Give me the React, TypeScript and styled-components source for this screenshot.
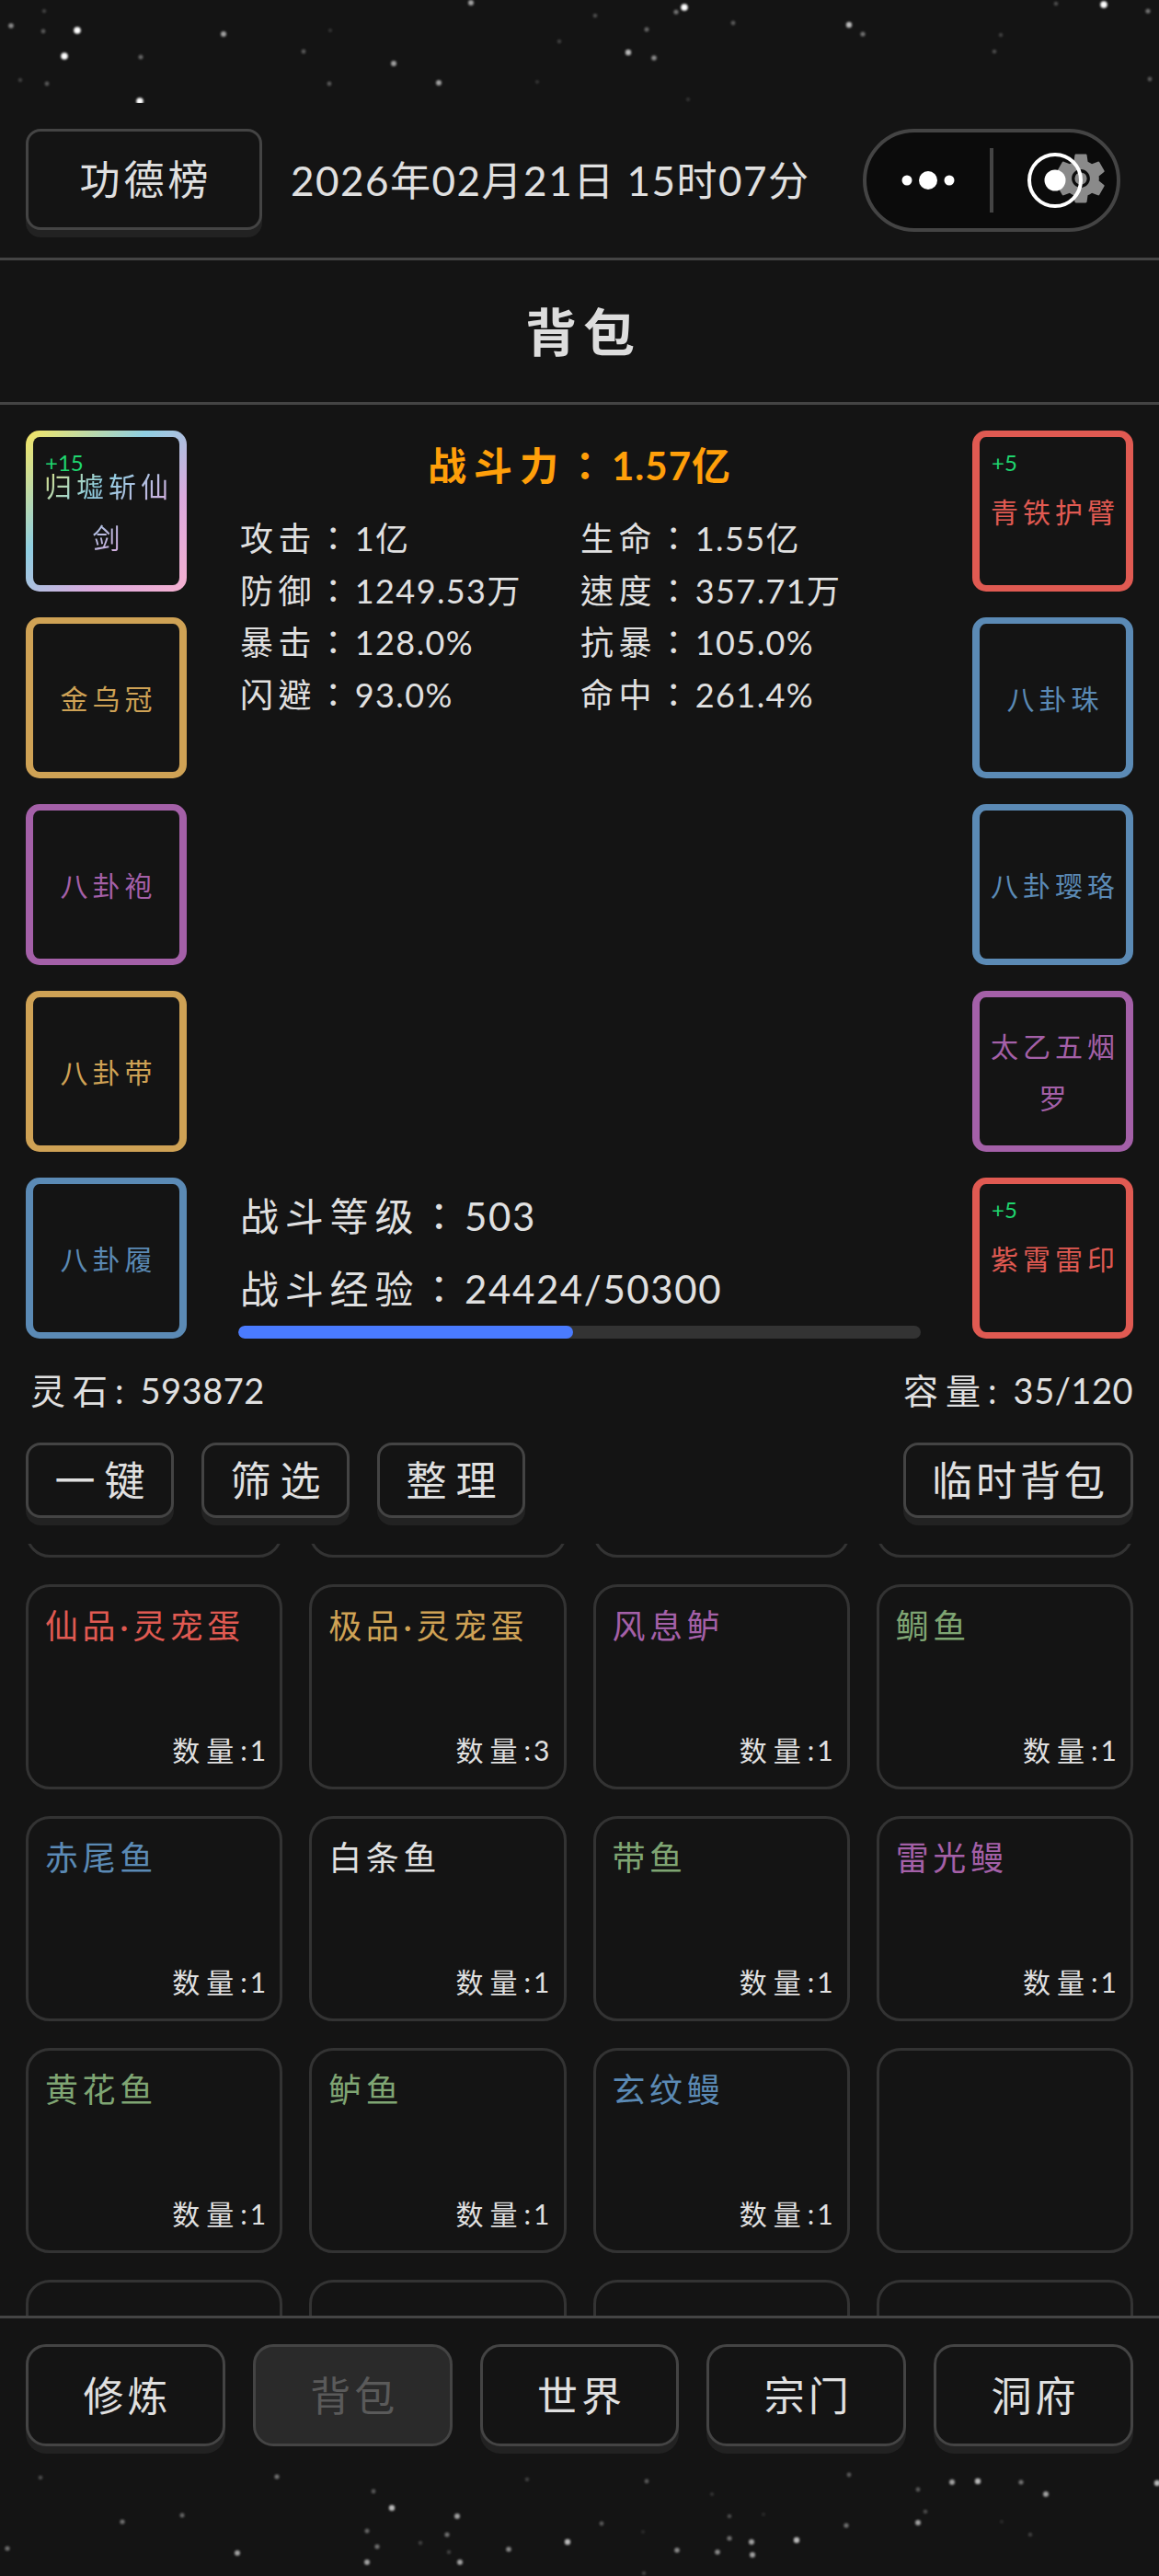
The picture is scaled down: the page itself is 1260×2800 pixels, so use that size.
import React from 'react'
import styled, { createGlobalStyle } from 'styled-components'

const FONT = `Lato, "Noto Sans CJK SC", sans-serif`
// TC keeps the full-width colon centred in its em box, like the reference
const FONT_COLON = `Lato, "Noto Sans CJK TC", sans-serif`

const GlobalStyle = createGlobalStyle`
    html, body {
        margin: 0;
        padding: 0;
        background: #141414;
    }
    * {
        box-sizing: border-box;
    }
`

const Page = styled.div`
    width: 1260px;
    height: 2800px;
    overflow: hidden;
    display: flex;
    flex-direction: column;
    background: #141414;
    color: #e0e0e0;
    font-family: ${FONT};
`

const StarSvg = styled.svg`
    display: block;
    flex: none;
`

const Header = styled.header`
    flex: none;
    height: 171px;
    display: flex;
    align-items: flex-start;
    padding: 28px 42px 0 28px;
    border-bottom: 3px solid #444;
`

const RaisedButton = styled.button<{ $spacing?: number; $width: number; $height: number }>`
    flex: none;
    width: ${({ $width }) => $width}px;
    height: ${({ $height }) => $height}px;
    padding: 0 0 0 ${({ $spacing }) => $spacing ?? 4}px;
    border: 3px solid #444;
    border-radius: 16px;
    background: #141414;
    box-shadow: 0 8px 0 #222;
    color: #e0e0e0;
    font-family: ${FONT};
    font-size: 44px;
    line-height: 1;
    letter-spacing: ${({ $spacing }) => $spacing ?? 4}px;
`

const DateText = styled.div`
    margin-left: 31px;
    height: 112px;
    line-height: 112px;
    font-size: 44px;
    letter-spacing: 1.5px;
    white-space: nowrap;
`

const Capsule = styled.div`
    margin-left: auto;
    width: 280px;
    height: 112px;
    display: flex;
    align-items: center;
    border: 4px solid #444;
    border-radius: 56px;
    background: #0b0b0b;
`

const CapsuleCell = styled.div`
    flex: 1;
    display: flex;
    justify-content: center;
    align-items: center;
`

const CapsuleDivider = styled.div`
    flex: none;
    width: 4px;
    height: 70px;
    background: #444;
`

const TitleBar = styled.div`
    flex: none;
    height: 157px;
    display: flex;
    align-items: center;
    justify-content: center;
    padding: 0 0 6px 8px;
    border-bottom: 3px solid #444;
    color: #ddd;
    font-size: 56px;
    font-weight: 700;
    letter-spacing: 7px;
`

const EquipSection = styled.section`
    flex: none;
    display: flex;
    padding: 28px 28px 0;
`

const SlotColumn = styled.div`
    flex: none;
    display: flex;
    flex-direction: column;
    gap: 28px;
`

const Slot = styled.div<{ $color: string }>`
    position: relative;
    width: 175px;
    height: 175px;
    display: flex;
    align-items: center;
    justify-content: center;
    padding: 0 2px 0 7px;
    border-style: solid;
    border-color: ${({ $color }) => $color};
    border-width: 7px 8px;
    border-radius: 15px;
    color: ${({ $color }) => $color};
    font-size: 30px;
    line-height: 56px;
    letter-spacing: 5px;
    text-align: center;
`

const RainbowSlot = styled(Slot)`
    border-color: transparent;
    background:
        linear-gradient(#141414, #141414) padding-box,
        linear-gradient(135deg, #f5e663 0%, #8fcfe2 38%, #dcaade 70%, #f5b0d0 100%) border-box;
`

const RainbowName = styled.span`
    background: linear-gradient(135deg, #e6e070 0%, #8fcfe2 35%, #dcaade 75%, #f5b0d0 100%);
    -webkit-background-clip: text;
    background-clip: text;
    color: transparent;
`

const EnhanceBadge = styled.span`
    position: absolute;
    top: 16px;
    left: 13px;
    color: #1fd66f;
    font-size: 24px;
    line-height: 24px;
    letter-spacing: 0;
`

const CenterColumn = styled.div`
    flex: 1;
    min-width: 0;
    display: flex;
    flex-direction: column;
    padding: 0 56px;
`

const Power = styled.div`
    height: 70px;
    margin-bottom: 19px;
    display: flex;
    align-items: center;
    justify-content: center;
    color: #ff9f0a;
    font-family: ${FONT_COLON};
    font-size: 42px;
    font-weight: 700;
    letter-spacing: 1px;
    white-space: nowrap;
`

const PowerLabel = styled.span`
    letter-spacing: 8px;
`

const StatGrid = styled.div`
    display: grid;
    grid-template-columns: 1fr 1fr;
    padding-left: 2px;
`

const Stat = styled.div`
    height: 56.5px;
    line-height: 56.5px;
    font-family: ${FONT_COLON};
    font-size: 36px;
    letter-spacing: 1.4px;
    white-space: nowrap;
`

const StatLabel = styled.span`
    letter-spacing: 5.6px;
`

const LevelBlock = styled.div`
    margin-top: auto;
`

const LevelLine = styled.div`
    height: 79px;
    padding-left: 2px;
    line-height: 79px;
    font-family: ${FONT_COLON};
    font-size: 42px;
    letter-spacing: 1.6px;
    white-space: nowrap;
`

const LevelLabel = styled.span`
    letter-spacing: 6.8px;
`

const ExpTrack = styled.div`
    height: 14px;
    border-radius: 7px;
    background: #333;
    overflow: hidden;
`

const ExpFill = styled.div`
    height: 100%;
    border-radius: 7px;
    background: #4a7bff;
`

const ResourceRow = styled.div`
    flex: none;
    display: flex;
    justify-content: space-between;
    height: 50px;
    margin-top: 31px;
    padding: 0 28px 0 33px;
    line-height: 50px;
    font-size: 38px;
    letter-spacing: 0.5px;
`

const ResourceLabel = styled.span`
    margin-right: 10px;
    letter-spacing: 8px;
`

const ActionRow = styled.div`
    flex: none;
    display: flex;
    gap: 30px;
    margin-top: 32px;
    padding: 0 28px;
`

const ActionSpacer = styled.div`
    flex: 1;
`

const ListViewport = styled.div`
    flex: none;
    height: 839px;
    margin-top: 28px;
    overflow: hidden;
`

// the list is scrolled: its first row is mostly out of view
const ItemGrid = styled.div`
    margin-top: -208px;
    padding: 0 28px;
    display: grid;
    grid-template-columns: repeat(4, 1fr);
    grid-auto-rows: 223px;
    gap: 29px;
`

const ItemCard = styled.div`
    display: flex;
    flex-direction: column;
    justify-content: space-between;
    padding: 18px 12px 20px 18px;
    border: 3px solid #333;
    border-radius: 26px;
`

const ItemName = styled.div<{ $color: string }>`
    color: ${({ $color }) => $color};
    font-size: 36px;
    line-height: 48px;
    letter-spacing: 4.6px;
    white-space: nowrap;
`

const ItemCount = styled.div`
    text-align: right;
    font-size: 30px;
    line-height: 40px;
    letter-spacing: 3px;
    white-space: nowrap;
`

const CountLabel = styled.span`
    letter-spacing: 7px;
`

const BottomNav = styled.nav`
    flex: none;
    height: 163px;
    display: grid;
    grid-template-columns: repeat(5, 1fr);
    gap: 30px;
    padding: 28px 28px 0;
    border-top: 3px solid #444;
`

const NavButton = styled.button<{ $active?: boolean }>`
    height: 111px;
    padding: 0 0 0 4px;
    border: 3px solid #444;
    border-radius: 22px;
    background: ${({ $active }) => ($active ? '#2a2a2a' : '#141414')};
    box-shadow: ${({ $active }) => ($active ? 'none' : '0 8px 0 #222')};
    color: ${({ $active }) => ($active ? '#5a5a5a' : '#e0e0e0')};
    font-family: ${FONT};
    font-size: 44px;
    line-height: 1;
    letter-spacing: 4px;
`

const RED = '#e05a52'
const GOLD = '#cfa255'
const PURPLE = '#a460a8'
const BLUE = '#5b8ab5'
const GREEN = '#7fa573'
const WHITE = '#e0e0e0'

const leftSlots = [
    { name: '金乌冠', color: GOLD },
    { name: '八卦袍', color: PURPLE },
    { name: '八卦带', color: GOLD },
    { name: '八卦履', color: BLUE },
]

const rightSlots = [
    { name: '青铁护臂', color: RED, plus: '+5' },
    { name: '八卦珠', color: BLUE },
    { name: '八卦璎珞', color: BLUE },
    { name: '太乙五烟罗', color: PURPLE },
    { name: '紫霄雷印', color: RED, plus: '+5' },
]

const stats = [
    ['攻击', '1亿'],
    ['生命', '1.55亿'],
    ['防御', '1249.53万'],
    ['速度', '357.71万'],
    ['暴击', '128.0%'],
    ['抗暴', '105.0%'],
    ['闪避', '93.0%'],
    ['命中', '261.4%'],
]

type Item = { name: string; color: string; count: number }

const items: (Item | null)[] = [
    null, null, null, null,
    { name: '仙品·灵宠蛋', color: RED, count: 1 },
    { name: '极品·灵宠蛋', color: GOLD, count: 3 },
    { name: '风息鲈', color: PURPLE, count: 1 },
    { name: '鲷鱼', color: GREEN, count: 1 },
    { name: '赤尾鱼', color: BLUE, count: 1 },
    { name: '白条鱼', color: WHITE, count: 1 },
    { name: '带鱼', color: GREEN, count: 1 },
    { name: '雷光鳗', color: PURPLE, count: 1 },
    { name: '黄花鱼', color: GREEN, count: 1 },
    { name: '鲈鱼', color: GREEN, count: 1 },
    { name: '玄纹鳗', color: BLUE, count: 1 },
    null,
    null, null, null, null,
]

const navItems = ['修炼', '背包', '世界', '宗门', '洞府']

// [x, y, brightness]
const topStars = [
    [512, 3, 0.6], [744, 8, 1], [735, 13, 0.4], [1200, 5, 1], [1248, 12, 0.4], [1148, 4, 0.25],
    [48, 12, 0.2], [12, 28, 0.5], [47, 34, 0.3], [84, 33, 1], [243, 37, 0.6], [70, 61, 1],
    [153, 62, 0.35], [330, 56, 0.3], [428, 69, 0.6], [683, 57, 0.7], [711, 63, 0.5], [703, 32, 0.35],
    [647, 17, 0.25], [797, 25, 0.3], [923, 27, 0.7], [938, 37, 0.4], [1088, 38, 0.2], [1081, 56, 0.25],
    [359, 33, 0.15], [608, 45, 0.2], [22, 87, 0.2], [51, 91, 0.3], [358, 91, 0.3], [477, 90, 0.6],
    [584, 89, 0.15], [1250, 86, 0.3], [748, 108, 0.15], [152, 110, 1],
]

const bottomStars = [
    [44, 13, 0.25], [301, 12, 0.4], [573, 15, 0.2], [703, 17, 0.3], [923, 10, 0.3], [1035, 18, 0.6],
    [1063, 17, 0.7], [1110, 18, 0.4], [1258, 19, 0.7], [998, 26, 0.3], [1137, 31, 0.6], [406, 28, 0.3],
    [774, 31, 0.15], [426, 46, 0.7], [497, 55, 0.6], [198, 54, 0.35], [133, 61, 0.4], [1006, 50, 0.25],
    [793, 55, 0.25], [830, 53, 0.1], [920, 65, 0.4], [998, 62, 0.6], [654, 63, 0.3], [1089, 61, 0.1],
    [399, 71, 0.35], [486, 75, 0.4], [699, 72, 0.1], [1120, 75, 0.2], [793, 79, 0.4], [817, 83, 0.6],
    [866, 81, 0.7], [617, 83, 0.7], [457, 84, 0.2], [410, 88, 0.4], [8, 90, 0.4], [553, 91, 0.5],
    [736, 92, 0.5], [780, 94, 0.5], [818, 97, 0.6], [258, 95, 0.6], [488, 94, 0.2], [399, 105, 0.6],
    [500, 105, 0.6], [700, 117, 0.2],
]

const StarBand: React.FunctionComponent<{ height: number; stars: number[][] }> = ({ height, stars }) => (
    <StarSvg width={1260} height={height} viewBox={`0 0 1260 ${height}`}>
        <defs>
            <filter id={`soft${height}`}>
                <feGaussianBlur stdDeviation="1" />
            </filter>
        </defs>
        <g filter={`url(#soft${height})`} fill="#fff">
            {stars.map(([x, y, b], index) => (
                <circle key={index} cx={x} cy={y} r={1.8 + b * 2} opacity={b} />
            ))}
        </g>
    </StarSvg>
)

const DotsIcon = () => (
    <svg width="70" height="24" viewBox="0 0 70 24">
        <circle cx="12" cy="12" r="5.5" fill="#fff" />
        <circle cx="35" cy="12" r="10" fill="#fff" />
        <circle cx="58" cy="12" r="5.5" fill="#fff" />
    </svg>
)

const TargetIcon = () => (
    <svg width="124" height="70" viewBox="0 0 124 70">
        <g transform="translate(57 0) scale(2.75)" fill="#8a8a8a">
            <path d="M19.14 12.94c.04-.3.06-.61.06-.94 0-.32-.02-.64-.07-.94l2.03-1.58c.18-.14.23-.41.12-.61l-1.92-3.32c-.12-.22-.37-.29-.59-.22l-2.39.96c-.5-.38-1.03-.7-1.62-.94l-.36-2.54c-.04-.24-.24-.41-.48-.41h-3.84c-.24 0-.43.17-.47.41l-.36 2.54c-.59.24-1.13.57-1.62.94l-2.39-.96c-.22-.08-.47 0-.59.22L2.74 8.87c-.12.21-.08.47.12.61l2.03 1.58c-.05.3-.09.63-.09.94s.02.64.07.94l-2.03 1.58c-.18.14-.23.41-.12.61l1.92 3.32c.12.22.37.29.59.22l2.39-.96c.5.38 1.03.7 1.62.94l.36 2.54c.05.24.24.41.48.41h3.84c.24 0 .44-.17.47-.41l.36-2.54c.59-.24 1.13-.56 1.62-.94l2.39.96c.22.08.47 0 .59-.22l1.92-3.32c.12-.22.07-.47-.12-.61l-2.01-1.58zM12 15.6c-1.98 0-3.6-1.62-3.6-3.6s1.62-3.6 3.6-3.6 3.6 1.62 3.6 3.6-1.62 3.6-3.6 3.6z" />
            <circle cx="12" cy="12" r="2.4" />
        </g>
        <circle cx="62" cy="35" r="28" fill="none" stroke="#fff" strokeWidth="4" />
        <circle cx="62" cy="35" r="11.5" fill="#fff" />
    </svg>
)

const App: React.FunctionComponent = () => {
    return (
        <Page>
            <GlobalStyle />
            <StarBand height={112} stars={topStars} />

            <Header>
                <RaisedButton $width={257} $height={110} $spacing={4}>功德榜</RaisedButton>
                <DateText>2026年02月21日 15时07分</DateText>
                <Capsule>
                    <CapsuleCell><DotsIcon /></CapsuleCell>
                    <CapsuleDivider />
                    <CapsuleCell><TargetIcon /></CapsuleCell>
                </Capsule>
            </Header>

            <TitleBar>背包</TitleBar>

            <EquipSection>
                <SlotColumn>
                    <RainbowSlot $color="#dcaade">
                        <EnhanceBadge>+15</EnhanceBadge>
                        <RainbowName>归墟斩仙剑</RainbowName>
                    </RainbowSlot>
                    {leftSlots.map(slot => (
                        <Slot key={slot.name} $color={slot.color}>{slot.name}</Slot>
                    ))}
                </SlotColumn>

                <CenterColumn>
                    <Power>
                        <PowerLabel>战斗力：</PowerLabel>
                        1.57亿
                    </Power>
                    <StatGrid>
                        {stats.map(([label, value]) => (
                            <Stat key={label}>
                                <StatLabel>{label}：</StatLabel>
                                {value}
                            </Stat>
                        ))}
                    </StatGrid>
                    <LevelBlock>
                        <LevelLine><LevelLabel>战斗等级：</LevelLabel>503</LevelLine>
                        <LevelLine><LevelLabel>战斗经验：</LevelLabel>24424/50300</LevelLine>
                        <ExpTrack>
                            <ExpFill style={{ width: '49.1%' }} />
                        </ExpTrack>
                    </LevelBlock>
                </CenterColumn>

                <SlotColumn>
                    {rightSlots.map(slot => (
                        <Slot key={slot.name} $color={slot.color}>
                            {slot.plus && <EnhanceBadge>{slot.plus}</EnhanceBadge>}
                            {slot.name}
                        </Slot>
                    ))}
                </SlotColumn>
            </EquipSection>

            <ResourceRow>
                <span><ResourceLabel>灵石:</ResourceLabel>593872</span>
                <span><ResourceLabel>容量:</ResourceLabel>35/120</span>
            </ResourceRow>

            <ActionRow>
                <RaisedButton $width={161} $height={82} $spacing={10}>一键</RaisedButton>
                <RaisedButton $width={161} $height={82} $spacing={10}>筛选</RaisedButton>
                <RaisedButton $width={161} $height={82} $spacing={10}>整理</RaisedButton>
                <ActionSpacer />
                <RaisedButton $width={250} $height={82} $spacing={4}>临时背包</RaisedButton>
            </ActionRow>

            <ListViewport>
                <ItemGrid>
                    {items.map((item, index) => (
                        <ItemCard key={index}>
                            {item && (
                                <>
                                    <ItemName $color={item.color}>{item.name}</ItemName>
                                    <ItemCount><CountLabel>数量</CountLabel>:{item.count}</ItemCount>
                                </>
                            )}
                        </ItemCard>
                    ))}
                </ItemGrid>
            </ListViewport>

            <BottomNav>
                {navItems.map(name => (
                    <NavButton key={name} $active={name === '背包'}>{name}</NavButton>
                ))}
            </BottomNav>

            <StarBand height={120} stars={bottomStars} />
        </Page>
    )
}

export default App
